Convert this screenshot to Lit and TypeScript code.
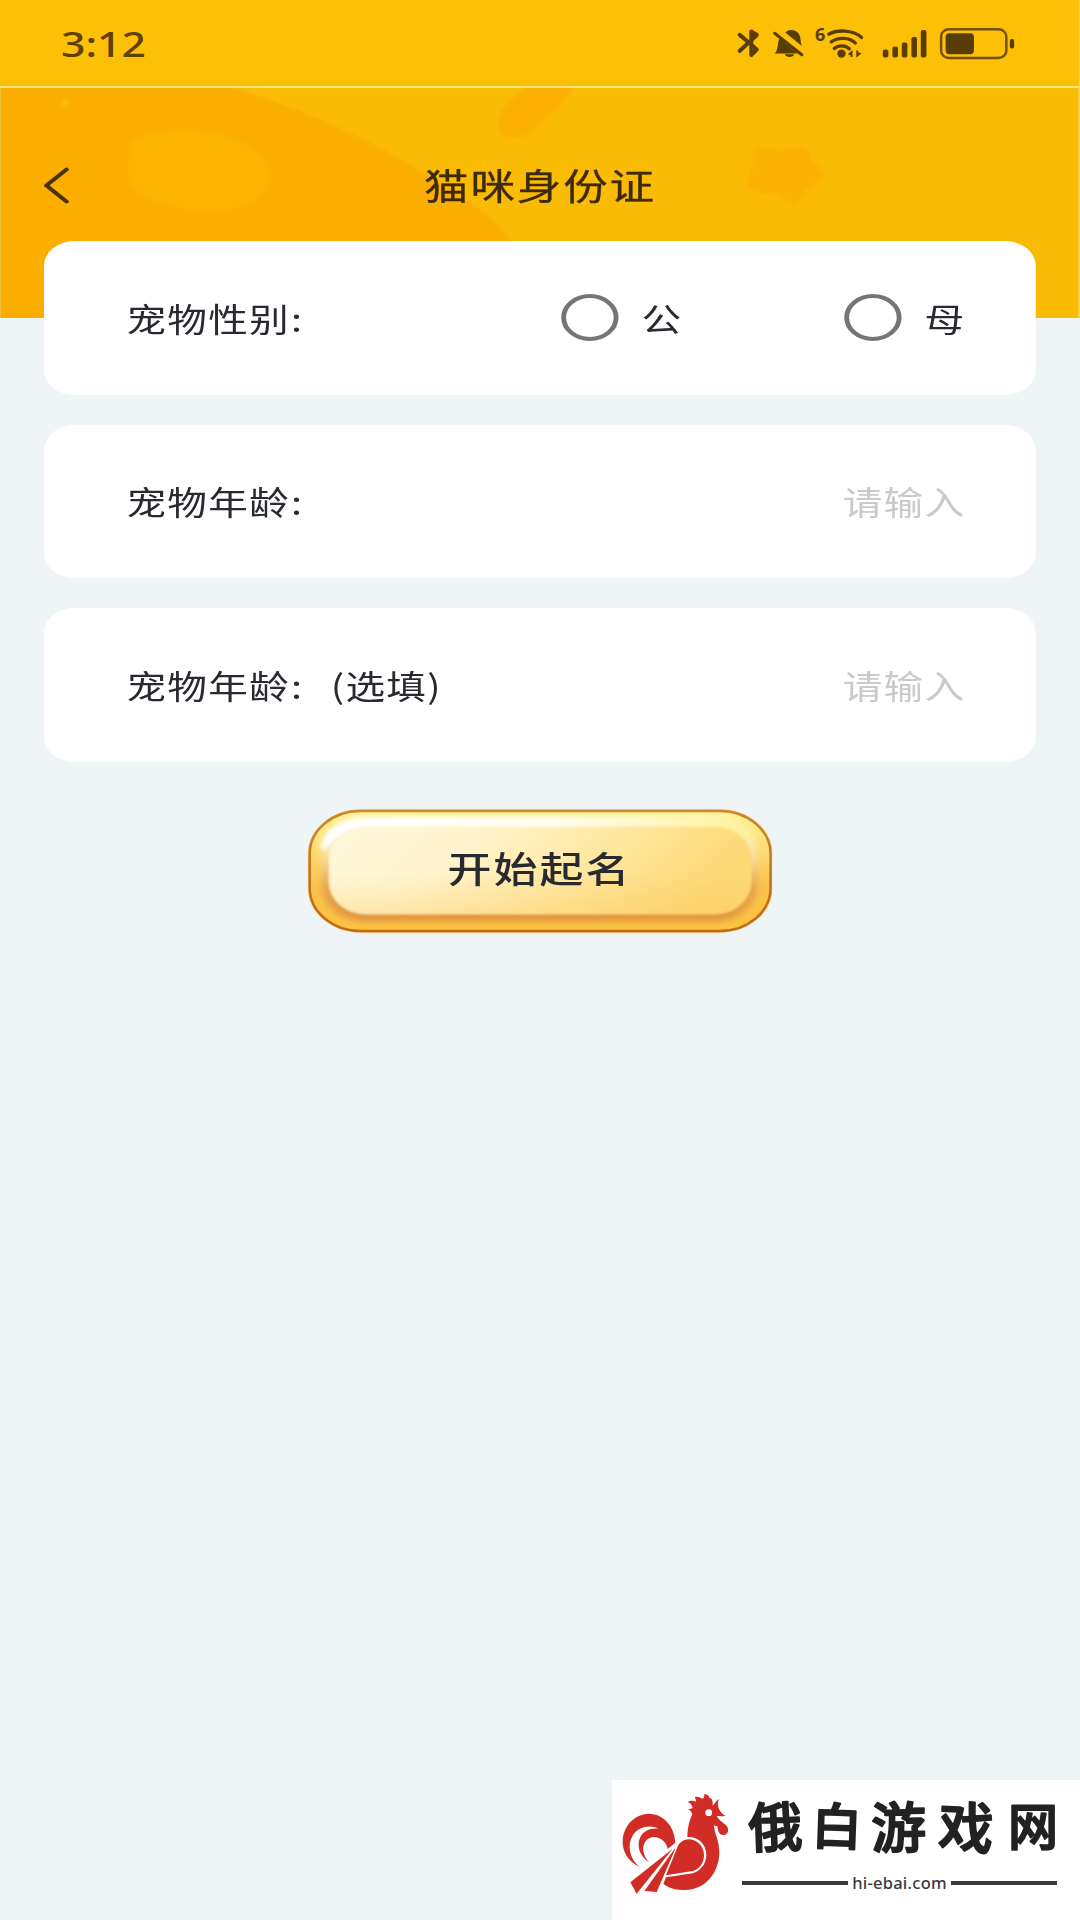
import { LitElement, html, css, svg } from "lit";
import { customElement } from "lit/decorators.js";

const statusIcons = svg`
  <svg class="status-icons" viewBox="0 0 320 70" preserveAspectRatio="none">
    <g fill="none" stroke="#5a3d04" stroke-linecap="round" stroke-linejoin="round">
      <path d="M19.800 24.800 L37 39.500 L31.500 45 V21.500 L37 25 L19.800 41" stroke-width="4"/>
      <g stroke-width="3.300" transform="translate(0 10)">
        <path d="M109 14.200 C117 9.500 133 9.500 141.800 17.500"/>
        <path d="M111.500 21.800 C118 17 130 17 135.500 23"/>
        <path d="M114.500 28.500 C118.500 25 125.500 25 129.500 28.800"/>
      </g>
      <rect x="221.300" y="19.300" width="65.200" height="28.600" rx="8" ry="7" stroke-width="2.500" stroke="#74500a"/>
    </g>
    <g fill="#5a3d04" transform="translate(0 10)">
      <path d="M55 33.500 C58.500 29.500 57.500 24 59.500 18.500 L78 33.500 Z"/>
      <path d="M65.500 12.500 C67.500 10.500 70 9.800 71.500 10 C77 10 80 14 80.500 18 C81 21 81 23.500 82 26 Z"/>
      <path d="M65 34.300 H74.500 A5 4 0 0 1 65 34.300Z"/>
      <path d="M54.800 13.300 L82 34.700" stroke="#5a3d04" stroke-width="3" stroke-linecap="round"/>
      <circle cx="121.700" cy="33.600" r="4.200"/>
      <path d="M128 34.200 L132.700 30 V37 H130.700 V35.200Z M141.800 33.200 L136.500 37.500 V30.500 H138.300 V32.200Z"/>
      <rect x="163" y="29.500" width="5.600" height="8" rx="2"/>
      <rect x="172.600" y="26.500" width="5.600" height="11" rx="2"/>
      <rect x="182" y="22.500" width="5.600" height="15" rx="2"/>
      <rect x="191.600" y="17" width="5.600" height="20.500" rx="2"/>
      <rect x="201" y="10" width="5.600" height="27.500" rx="2"/>
      <rect x="225.800" y="13.200" width="28.400" height="21" rx="4"/>
      <rect x="290" y="19" width="4.300" height="9.500" rx="2"/>
    </g>
    <text class="wifi-gen" x="95.200" y="31.500">6</text>
  </svg>`;

const headerArt = svg`
  <svg class="header-art" viewBox="0 88 1080 230" preserveAspectRatio="none">
    <defs><filter id="soft"><feGaussianBlur stdDeviation="1.800"/></filter></defs>
    <rect y="88" width="1080" height="230" fill="#fabb05"/>
    <g filter="url(#soft)">
      <path d="M-10 80 H205 C300 105 380 145 425 174 C470 200 500 220 514 245 V330 H-10Z" fill="#fbae04"/>
      <path d="M129 150 C132 130 180 128 215 134 C255 143 275 160 270 180 C262 205 235 212 205 211 C165 209 125 195 128 170Z" fill="#fbb404"/>
      <path d="M525 80 H575 C570 104 548 116 535 128 C525 142 502 141 498 128 C496 111 510 100 525 88Z" fill="#fbb005"/>
      <path d="M756 149 C764 145 773 151 781 150 C789 145 805 145 809 153 C809 161 813 164 822 169 C828 175 824 183 812 185 C804 188 804 199 797 202 C786 206 781 195 771 193 C759 196 747 190 747 182 C747 176 754 171 752 163 C751 156 752 151 756 149Z" fill="#fbb105"/>
      <circle cx="65" cy="103" r="4" fill="#fbb90c"/>
    </g>
    <path d="M.5 88 V318" stroke="#f2bf3a" stroke-width="1"/>
    <path d="M1079.200 88 V318" stroke="#fdd96a" stroke-width="1.600"/>
  </svg>`;

const buttonArt = svg`
  <svg class="button-art" viewBox="0 0 1394 370" preserveAspectRatio="none">
    <defs>
      <linearGradient id="edge" x1="0" y1="0" x2="0" y2="1">
        <stop offset="0" stop-color="#cc8a2c"/><stop offset=".6" stop-color="#b5701f"/><stop offset="1" stop-color="#c06a14"/>
      </linearGradient>
      <linearGradient id="rim" x1="0" y1="0" x2="0" y2="1">
        <stop offset="0" stop-color="#fff59c"/><stop offset=".3" stop-color="#fddd78"/>
        <stop offset=".65" stop-color="#fbc04a"/><stop offset="1" stop-color="#fec442"/>
      </linearGradient>
      <linearGradient id="groove" x1="0" y1="0" x2="0" y2="1">
        <stop offset="0" stop-color="#fff8cc"/><stop offset=".35" stop-color="#fae2a0"/>
        <stop offset=".65" stop-color="#e8a850"/><stop offset="1" stop-color="#e0943c"/>
      </linearGradient>
      <linearGradient id="face" x1="0" y1="0" x2="1" y2=".22">
        <stop offset="0" stop-color="#fff8dc"/><stop offset=".35" stop-color="#fff4cd"/>
        <stop offset=".65" stop-color="#fee9a4"/><stop offset="1" stop-color="#fdd976"/>
      </linearGradient>
      <linearGradient id="shade" x1=".45" y1="0" x2=".52" y2="1">
        <stop offset=".5" stop-color="#ffc860" stop-opacity="0"/><stop offset="1" stop-color="#ffc45c" stop-opacity=".32"/>
      </linearGradient>
      <linearGradient id="gleam" x1="0" y1="0" x2="1" y2="0">
        <stop offset="0" stop-color="#fff"/><stop offset=".55" stop-color="#fffdf0"/><stop offset="1" stop-color="#fff29a"/>
      </linearGradient>
      <filter id="b1" x="-10%" y="-30%" width="120%" height="160%"><feGaussianBlur stdDeviation="9"/></filter>
      <filter id="b2" x="-10%" y="-100%" width="120%" height="300%"><feGaussianBlur stdDeviation="7"/></filter>
      <filter id="b3"><feGaussianBlur stdDeviation="3"/></filter>
      <clipPath id="pill"><rect x="10" y="10" width="1374" height="350" rx="150" ry="125"/></clipPath>
    </defs>
    <rect x="1" y="1" width="1392" height="368" rx="158" ry="133" fill="#fbb860"/>
    <rect x="7" y="6" width="1380" height="358" rx="152" ry="128" fill="url(#rim)" stroke="url(#edge)" stroke-width="7"/>
    <g clip-path="url(#pill)">
      <rect x="42" y="28" width="1306" height="308" rx="130" ry="108" fill="url(#groove)" filter="url(#b1)"/>
      <path d="M46 118 C58 62 110 34 190 32 H1180 C1250 34 1300 50 1320 76 C1270 56 1230 54 1180 54 H220 C130 56 90 66 46 118Z" fill="url(#gleam)" stroke="url(#gleam)" stroke-width="16" filter="url(#b2)"/>
    </g>
    <rect x="64" y="52" width="1266" height="262" rx="110" ry="96" fill="url(#face)" filter="url(#b3)"/>
    <rect x="64" y="52" width="1266" height="262" rx="110" ry="96" fill="url(#shade)" filter="url(#b3)"/>
  </svg>`;

const rooster = svg`
  <svg class="rooster" viewBox="0 0 390 390">
    <g fill="#d22c26">
      <path d="M90 262 C52 244 36 212 38 180 C42 132 78 102 117 101 C160 102 194 138 196 188 L173 207 C170 186 152 171 131 171 C98 174 88 215 117 246 C93 232 82 205 87 182 C93 157 116 143 146 146 C120 133 86 140 69 165 C50 195 58 237 90 262Z"/>
      <path d="M188 206 L61 307 L80 341Z"/>
      <path d="M194 206 L103 333 L140 336 L196 206Z"/>
      <path d="M232 171 C233 142 238 122 247 103 C244 94 242 92 234 88 C240 87 244 86 248 84 C244 72 242 70 233 66 C241 60 250 62 259 65 C257 58 256 55 255 51 C263 48 272 54 279 56 C282 52 284 47 283 42 C293 43 297 47 299 55 C306 54 309 62 308 77 C315 70 319 61 327 56 C321 69 324 83 330 92 C334 99 340 104 347 107 C339 110 328 108 320 108 C326 120 338 127 347 134 C359 145 356 164 341 165 C325 165 324 150 322 138 C318 139 313 137 312 134 C312 160 329 180 328 222 C325 280 285 330 225 330 C200 330 178 326 160 311 L168 292 L249 280 C278 270 293 243 288 214 C281 183 259 170 232 171Z"/>
      <path d="M168 286 L204 197 C212 184 224 178 239 178 C262 180 281 199 282 224 C282 250 268 267 247 273Z"/>
    </g>
    <circle cx="296" cy="98" r="10" fill="#fff"/>
  </svg>`;

/* Each character of the brand name: left edge, baseline, size, tilt. */
const brandGlyphs: [string, number, number, number, number][] = [
  ["俄", 6, 60, 54, -2],
  ["白", 70, 58, 50, 2],
  ["游", 129, 61, 55, -1],
  ["戏", 197, 61, 55, 3],
  ["网", 266, 58, 50, 0],
];

@customElement("app-root")
export class AppRoot extends LitElement {
  static styles = css`
    :host {
      display: block;
      position: relative;
      width: 1080px;
      height: 1920px;
      overflow: hidden;
      background: #eff4f7;
      font-family: "Noto Sans CJK SC", sans-serif;
      color: #292930;
    }
    /* The phone content is drawn wider than tall by this factor. */
    .screen {
      width: 885.25px;
      height: 1920px;
      display: flex;
      flex-direction: column;
      transform: scaleX(1.22);
      transform-origin: 0 0;
    }
    .status {
      box-sizing: border-box;
      height: 88px;
      flex: none;
      display: flex;
      justify-content: space-between;
      background: #fcc006;
      border-bottom: 2px solid #ffe873;
      padding: 10px 32.8px 0 50px;
    }
    .time {
      font: 500 35px/68px "Noto Sans", sans-serif;
      color: #5f4005;
    }
    .status-icons { width: 262.3px; height: 70px; display: block; }
    .wifi-gen { font: 700 18px "Noto Sans", sans-serif; fill: #5a3d04; }
    .header {
      position: relative;
      height: 230px;
      flex: none;
    }
    .header-art {
      position: absolute;
      inset: 0;
      width: 100%;
      height: 100%;
    }
    .nav {
      position: relative;
      display: grid;
      grid-template-columns: 36px 1fr 36px;
      align-items: center;
      padding: 64.500px 34px 0 34px;
      height: 64px;
    }
    .back { width: 26px; height: 38px; display: block; }
    .title {
      text-align: center;
      font-size: 36.500px;
      letter-spacing: 1.500px;
      line-height: 64px;
      color: #3c2a0b;
      -webkit-text-stroke: .3px #3c2a0b;
    }
    .form {
      position: relative;
      display: flex;
      flex-direction: column;
      gap: 30px;
      margin: -77px 36px 0 35.700px;
    }
    .card {
      box-sizing: border-box;
      height: 153.6px;
      border-radius: 25px;
      background: #fff;
      display: flex;
      align-items: center;
      justify-content: space-between;
      padding: 0 58px 0 68px;
      font-size: 32.500px;
      letter-spacing: 1px;
      line-height: 50px;
      white-space: nowrap;
    }
    .label { display: flex; }
    .colon { width: 32.700px; padding-left: .8px; }
    .options { display: flex; gap: 133px; }
    .option { display: flex; align-items: center; gap: 18.500px; }
    .radio {
      box-sizing: border-box;
      width: 47.2px;
      height: 47px;
      border: 4.500px solid #757575;
      border-radius: 50%;
    }
    .radio { width: 47px; }
    .placeholder { color: #cacaca; }
    .start {
      position: relative;
      align-self: center;
      margin-top: 47px;
      width: 381.500px;
      height: 124px;
      display: flex;
      justify-content: center;
    }
    .button-art { position: absolute; inset: 0; width: 100%; height: 100%; }
    .start-label {
      position: relative;
      font-size: 36px;
      letter-spacing: 1.700px;
      font-weight: 500;
      line-height: 117px;
      padding-right: 1px;
    }
    .brand {
      position: absolute;
      right: 0;
      bottom: 0;
      box-sizing: border-box;
      width: 468px;
      height: 140px;
      background: #fff;
      display: flex;
    }
    .rooster { width: 130px; height: 130px; margin-left: -2px; flex: none; }
    .brand-body { display: flex; flex-direction: column; width: 315px; margin-left: 2px; }
    .brand-name { display: block; width: 315px; height: 72px; margin-top: 7px; overflow: visible; }
    .brand-name text {
      font-family: "Noto Sans CJK SC", sans-serif;
      font-weight: 500;
      fill: #222;
      stroke: #222;
      stroke-width: 1.800px;
      stroke-linejoin: round;
    }
    .brand-site {
      display: flex;
      align-items: center;
      height: 24px;
      margin-top: 12px;
      font: 500 16.500px/24px "Noto Sans", sans-serif;
      color: #3a3a3a;
    }
    .rule { flex: 1; height: 3.500px; background: #3a3a3a; }
    .site { width: 103px; text-align: center; line-height: 22px; letter-spacing: .25px; }
  `;

  render() {
    return html`
      <div class="screen">
        <div class="status">
          <div class="time">3:12</div>
          ${statusIcons}
        </div>
        <div class="header">
          ${headerArt}
          <div class="nav">
            <svg class="back" viewBox="0 0 26 38" preserveAspectRatio="none">
              <path d="M20.500 3.500 L4 19.500 L20.500 35.500" fill="none" stroke="#49330a" stroke-width="3.700" stroke-linecap="round" stroke-linejoin="round"/>
            </svg>
            <div class="title">猫咪身份证</div>
          </div>
        </div>
        <div class="form">
          <div class="card">
            <span class="label">宠物性别<span class="colon">:</span></span>
            <div class="options">
              ${["公", "母"].map(
                (name) => html`<div class="option"><span class="radio"></span><span>${name}</span></div>`
              )}
            </div>
          </div>
          ${["", "(选填)"].map(
            (note) => html`<div class="card">
              <span class="label">宠物年龄<span class="colon">:</span>${note}</span><span class="placeholder">请输入</span>
            </div>`
          )}
        </div>
        <div class="start">
          ${buttonArt}
          <span class="start-label">开始起名</span>
        </div>
      </div>
      <div class="brand">
        ${rooster}
        <div class="brand-body">
          <svg class="brand-name" viewBox="0 0 315 72">
            ${brandGlyphs.map(
              ([c, x, y, size, tilt]) => svg`<text x=${x} y=${y} font-size=${size}
                transform="rotate(${tilt} ${x + size / 2} ${y - size / 2})">${c}</text>`
            )}
          </svg>
          <div class="brand-site"><span class="rule"></span><span class="site">hi-ebai.com</span><span class="rule"></span></div>
        </div>
      </div>
    `;
  }
}
